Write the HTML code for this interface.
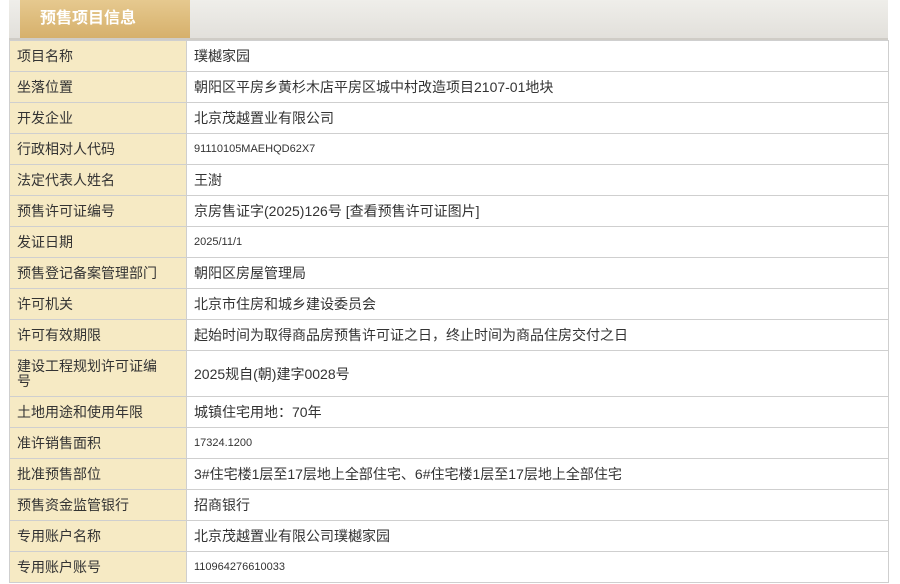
<!DOCTYPE html>
<html><head><meta charset="utf-8"><style>
body{margin:0;width:900px;height:584px;overflow:hidden;background:#fff;font-family:"Liberation Sans","Noto Sans CJK SC",sans-serif;}
.hdr{position:absolute;left:9px;top:0;width:879px;height:38px;background:linear-gradient(#efeeea,#e2e0db);border-bottom:2px solid #cfccc6;}
.tab{position:absolute;left:20px;top:0;width:170px;height:38px;background:linear-gradient(#e6c98f,#d6b06b);color:#fff;font-weight:bold;font-size:16px;line-height:38px;padding-left:20px;box-sizing:border-box;}
table{position:absolute;left:9px;top:40px;width:880px;border-collapse:collapse;font-size:14px;color:#333;table-layout:fixed;}
td{border:1px solid #cfcfcf;height:31px;padding:0 7px;box-sizing:border-box;}
td.l{width:177px;background:#f6eac4;line-height:15px;}
td.s{font-size:11px;}
</style></head><body>
<div class="hdr"></div><div class="tab">预售项目信息</div>
<table>
<tr><td class="l">项目名称</td><td>璞樾家园</td></tr>
<tr><td class="l">坐落位置</td><td>朝阳区平房乡黄杉木店平房区城中村改造项目2107-01地块</td></tr>
<tr><td class="l">开发企业</td><td>北京茂越置业有限公司</td></tr>
<tr><td class="l">行政相对人代码</td><td class="s">91110105MAEHQD62X7</td></tr>
<tr><td class="l">法定代表人姓名</td><td>王澍</td></tr>
<tr><td class="l">预售许可证编号</td><td>京房售证字(2025)126号 [查看预售许可证图片]</td></tr>
<tr><td class="l">发证日期</td><td class="s">2025/11/1</td></tr>
<tr><td class="l">预售登记备案管理部门</td><td>朝阳区房屋管理局</td></tr>
<tr><td class="l">许可机关</td><td>北京市住房和城乡建设委员会</td></tr>
<tr><td class="l">许可有效期限</td><td>起始时间为取得商品房预售许可证之日，终止时间为商品住房交付之日</td></tr>
<tr><td class="l" style="height:46px">建设工程规划许可证编<br>号</td><td>2025规自(朝)建字0028号</td></tr>
<tr><td class="l">土地用途和使用年限</td><td>城镇住宅用地：70年</td></tr>
<tr><td class="l">准许销售面积</td><td class="s">17324.1200</td></tr>
<tr><td class="l">批准预售部位</td><td>3#住宅楼1层至17层地上全部住宅、6#住宅楼1层至17层地上全部住宅</td></tr>
<tr><td class="l">预售资金监管银行</td><td>招商银行</td></tr>
<tr><td class="l">专用账户名称</td><td>北京茂越置业有限公司璞樾家园</td></tr>
<tr><td class="l">专用账户账号</td><td class="s">110964276610033</td></tr>
</table>
</body></html>
